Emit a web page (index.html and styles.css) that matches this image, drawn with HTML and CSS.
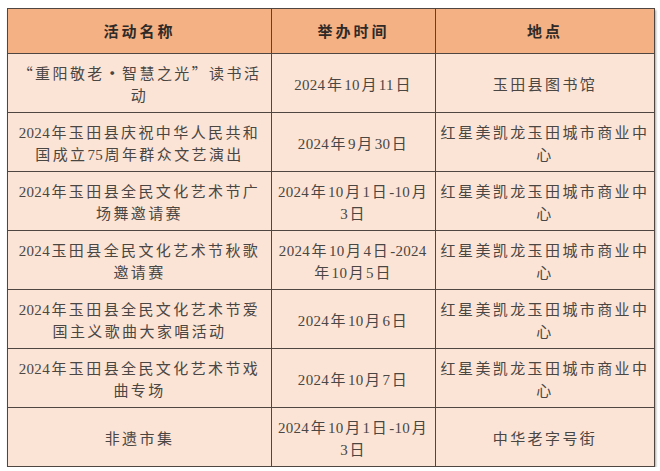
FILE: index.html
```html
<!DOCTYPE html>
<html lang="zh-CN">
<head>
<meta charset="utf-8">
<title>活动列表</title>
<link rel="stylesheet" href="styles.css">
</head>
<body>
<div class="wrap">
<table class="events">
  <colgroup>
    <col class="c1"><col class="c2"><col class="c3">
  </colgroup>
  <thead>
    <tr class="head">
      <th>活动名称</th>
      <th>举办时间</th>
      <th>地点</th>
    </tr>
  </thead>
  <tbody>
    <tr>
      <td><span class="cjk"><span class="q ql">“</span>重阳敬老<span class="q qc">·</span>智慧之光<span class="q qr">”</span>读书活</span><br>动</td>
      <td><span class="n">2024</span>年<span class="n">10</span>月<span class="n">11</span>日</td>
      <td>玉田县图书馆</td>
    </tr>
    <tr>
      <td><span class="n">2024</span>年玉田县庆祝中华人民共和<br>国成立<span class="n">75</span>周年群众文艺演出</td>
      <td><span class="n">2024</span>年<span class="n">9</span>月<span class="n">30</span>日</td>
      <td>红星美凯龙玉田城市商业中<br>心</td>
    </tr>
    <tr>
      <td><span class="n">2024</span>年玉田县全民文化艺术节广<br>场舞邀请赛</td>
      <td><span class="n">2024</span>年<span class="n">10</span>月<span class="n">1</span>日<span class="n">-10</span>月<br><span class="n">3</span>日</td>
      <td>红星美凯龙玉田城市商业中<br>心</td>
    </tr>
    <tr>
      <td><span class="n">2024</span>玉田县全民文化艺术节秋歌<br>邀请赛</td>
      <td><span class="n">2024</span>年<span class="n">10</span>月<span class="n">4</span>日<span class="n">-2024</span><br>年<span class="n">10</span>月<span class="n">5</span>日</td>
      <td>红星美凯龙玉田城市商业中<br>心</td>
    </tr>
    <tr>
      <td><span class="n">2024</span>年玉田县全民文化艺术节爱<br>国主义歌曲大家唱活动</td>
      <td><span class="n">2024</span>年<span class="n">10</span>月<span class="n">6</span>日</td>
      <td>红星美凯龙玉田城市商业中<br>心</td>
    </tr>
    <tr>
      <td><span class="n">2024</span>年玉田县全民文化艺术节戏<br>曲专场</td>
      <td><span class="n">2024</span>年<span class="n">10</span>月<span class="n">7</span>日</td>
      <td>红星美凯龙玉田城市商业中<br>心</td>
    </tr>
    <tr>
      <td>非遗市集</td>
      <td><span class="n">2024</span>年<span class="n">10</span>月<span class="n">1</span>日<span class="n">-10</span>月<br><span class="n">3</span>日</td>
      <td>中华老字号街</td>
    </tr>
  </tbody>
</table>
</div>
</body>
</html>
```

FILE: styles.css
```css
html, body {
  margin: 0;
  padding: 0;
  background: #ffffff;
}

.wrap {
  padding: 8px 0 0 7px;
}

.events {
  width: 647px;
  table-layout: fixed;
  border-collapse: collapse;
  font-family: "Liberation Serif", "Noto Sans CJK SC", serif;
  font-size: 15px;
  line-height: 22px;
  color: #4a4644;
  box-shadow: 1px 2px 2px rgba(0, 0, 0, 0.35);
}

.c1 { width: 264px; }
.c2 { width: 164px; }
.c3 { width: 219px; }

.events th,
.events td {
  border: 1px solid #4f4642;
  text-align: center;
  vertical-align: middle;
  padding: 3px 0 0 0;
  letter-spacing: 2.4px;
  font-weight: 400;
}

.head {
  height: 45px;
  background: #f4b183;
}

.head th {
  font-family: "Noto Sans CJK SC", serif;
  font-weight: 700;
  font-size: 15px;
  color: #2f2a28;
  letter-spacing: 3px;
  padding-top: 0;
}

.events tbody tr {
  height: 59px;
  background: #fbe4d5;
}

.n {
  letter-spacing: 0.3px;
  margin-right: 1.5px;
}

.cjk {
  font-family: "Noto Sans CJK SC", sans-serif;
}

.q {
  display: inline-block;
  width: 15px;
  letter-spacing: 0;
  margin-right: 2.4px;
}

.ql { text-align: right; }
.qc { text-align: center; font-weight: 700; }
.qr { text-align: left; }
```
